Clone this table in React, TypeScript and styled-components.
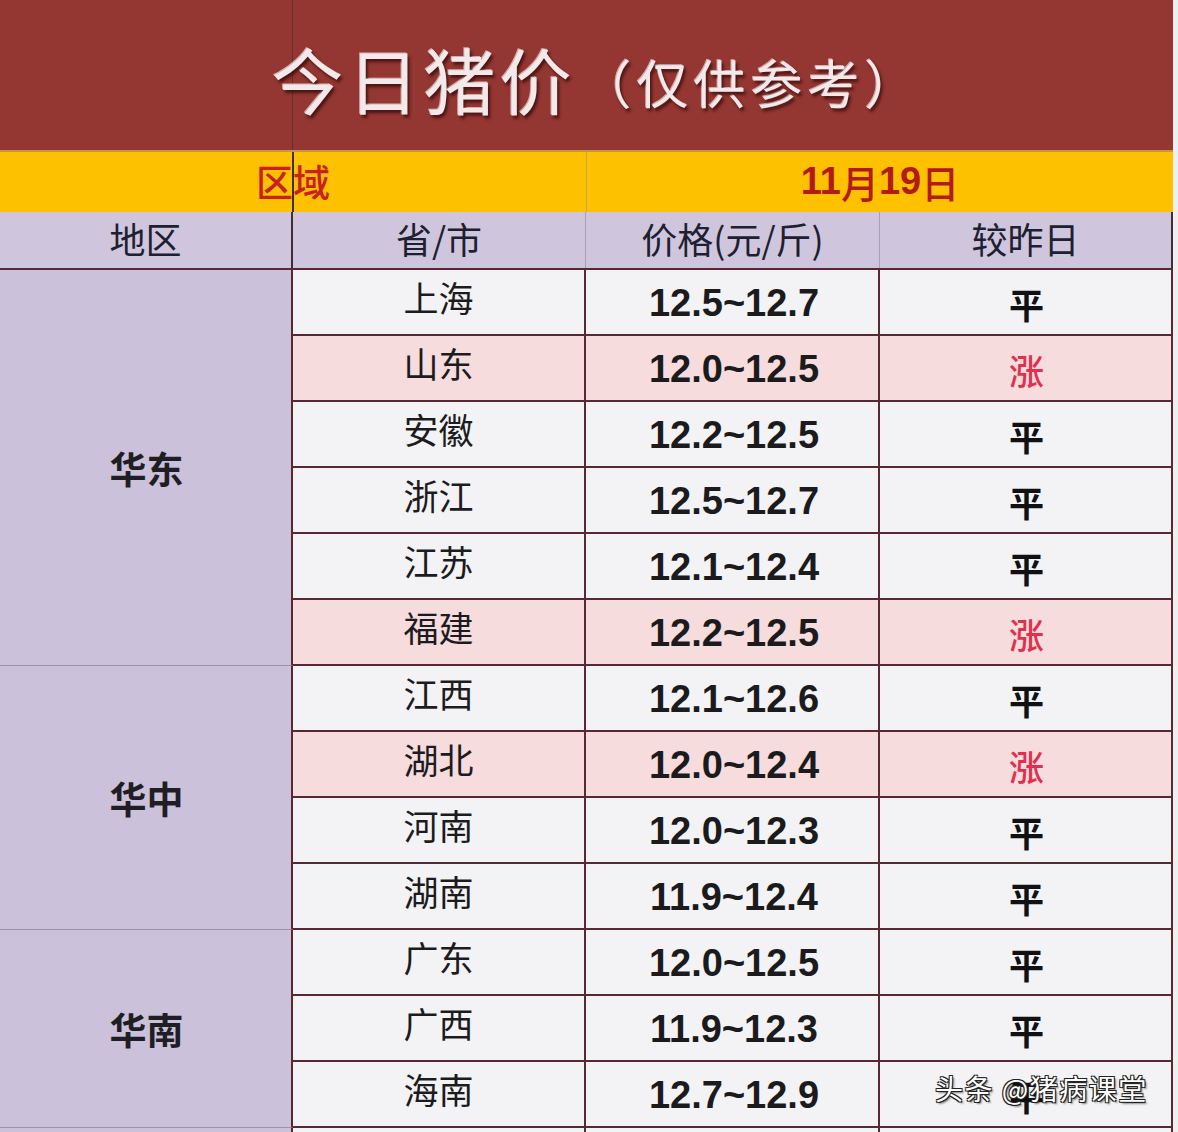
import styled, { createGlobalStyle } from "styled-components";

const GlobalStyle = createGlobalStyle`
  html, body {
    margin: 0;
    padding: 0;
    background: #eeeff1;
  }
  body {
    font-family: "Noto Sans CJK SC", "Noto Sans", sans-serif;
  }
`;

const CJK = `"Noto Sans CJK SC", "Noto Sans", sans-serif`;
const NUM = `"Liberation Sans", "Noto Sans CJK SC", sans-serif`;
const BORDER = "#5a2833";

const Page = styled.div`
  position: relative;
  width: 1178px;
  height: 1132px;
  overflow: hidden;
  background: #eeeff1;
`;

const Sheet = styled.div`
  width: 1173px;
  display: flex;
  flex-direction: column;
`;

const TitleBar = styled.div`
  position: relative;
  height: 150px;
  background: #943631;
  display: flex;
  align-items: center;
  justify-content: center;
  padding: 4px 0 0 20px;
  box-sizing: border-box;

  &::before {
    content: "";
    position: absolute;
    left: 292px;
    top: 0;
    bottom: 0;
    width: 1px;
    background: rgba(60, 40, 40, 0.55);
  }
`;

const TitleMain = styled.span`
  font-family: ${CJK};
  font-size: 72px;
  letter-spacing: 4px;
  color: #f3e8ea;
  text-shadow: 2px 3px 3px rgba(50, 10, 10, 0.75), -1px -1px 0 rgba(255, 255, 255, 0.6);
  position: relative;
`;

const TitleSub = styled.span`
  font-family: ${CJK};
  font-size: 52px;
  letter-spacing: 5px;
  color: #f3e8ea;
  margin-left: 4px;
  padding-top: 8px;
  text-shadow: 2px 3px 3px rgba(50, 10, 10, 0.75), -1px -1px 0 rgba(255, 255, 255, 0.6);
`;

const DateBar = styled.div`
  position: relative;
  height: 62px;
  display: grid;
  grid-template-columns: 587px 1fr;
  background: #fdc100;
  border-top: 2px solid #c9944a;
  box-sizing: border-box;

  &::before {
    content: "";
    position: absolute;
    left: 292px;
    top: 0;
    bottom: 0;
    width: 2px;
    background: #3e3030;
  }
`;

const DateCell = styled.div<{ $bold?: boolean; $divider?: boolean }>`
  display: flex;
  align-items: center;
  justify-content: center;
  font-family: ${(p) => (p.$bold ? NUM : CJK)};
  font-weight: ${(p) => (p.$bold ? 700 : 500)};
  font-size: ${(p) => (p.$bold ? "38px" : "37px")};
  color: ${(p) => (p.$bold ? "#b31b1b" : "#c92020")};
  border-right: ${(p) => (p.$divider ? "1px solid #c7a25a" : "none")};
  padding-bottom: 2px;
`;

const HeaderRow = styled.div`
  height: 58px;
  display: grid;
  grid-template-columns: 293px 293px 294px 1fr;
  background: #cfc6de;
  border-bottom: 2px solid ${BORDER};
  box-sizing: border-box;
`;

const HeaderCell = styled.div<{ $dark?: boolean }>`
  display: flex;
  align-items: center;
  justify-content: center;
  font-family: ${CJK};
  font-size: 36px;
  color: #1d2030;
  border-right: ${(p) => (p.$dark ? `2px solid #3e3036` : "1px solid #a99fb8")};
  padding-bottom: 4px;
`;

const Group = styled.div`
  display: grid;
  grid-template-columns: 293px 1fr;
`;

const RegionCell = styled.div`
  display: flex;
  align-items: center;
  justify-content: center;
  background: #cbc1db;
  border-right: 2px solid ${BORDER};
  border-bottom: 1px solid #9d92ad;
  font-family: ${CJK};
  font-weight: 700;
  font-size: 37px;
  color: #1e1e24;
  padding-left: 2px;
`;

const Rows = styled.div`
  display: flex;
  flex-direction: column;
`;

const Row = styled.div<{ $up?: boolean }>`
  height: 66px;
  display: grid;
  grid-template-columns: 293px 294px 1fr;
  background: ${(p) => (p.$up ? "#f6dcdc" : "#f3f3f5")};
  border-bottom: 2px solid ${BORDER};
  box-sizing: border-box;
`;

const Cell = styled.div`
  display: flex;
  align-items: center;
  justify-content: center;
  border-right: 2px solid ${BORDER};
`;

const Province = styled(Cell)`
  font-family: ${CJK};
  font-size: 35px;
  color: #1b1b20;
  padding-bottom: 12px;
`;

const Price = styled(Cell)`
  font-family: ${NUM};
  font-weight: 700;
  font-size: 38px;
  color: #1b1b1e;
  padding-top: 2px;
  padding-left: 4px;
`;

const Change = styled(Cell)<{ $up?: boolean }>`
  font-family: ${CJK};
  font-weight: ${(p) => (p.$up ? 500 : 700)};
  font-size: 35px;
  color: ${(p) => (p.$up ? "#e0304e" : "#111114")};
  padding-top: 2px;
  padding-left: 2px;
`;

const Watermark = styled.div`
  position: absolute;
  left: 935px;
  top: 1068px;
  font-family: ${CJK};
  font-size: 28px;
  color: #ffffff;
  letter-spacing: 1.5px;
  text-shadow: 1px 1px 0 #222, -1px -1px 0 #222, 1px -1px 0 #222, -1px 1px 0 #222,
    2px 2px 2px rgba(0, 0, 0, 0.5);
`;

type Item = { name: string; price: string; up?: boolean };
type Region = { region: string; items: Item[] };

const data: Region[] = [
  {
    region: "华东",
    items: [
      { name: "上海", price: "12.5~12.7" },
      { name: "山东", price: "12.0~12.5", up: true },
      { name: "安徽", price: "12.2~12.5" },
      { name: "浙江", price: "12.5~12.7" },
      { name: "江苏", price: "12.1~12.4" },
      { name: "福建", price: "12.2~12.5", up: true },
    ],
  },
  {
    region: "华中",
    items: [
      { name: "江西", price: "12.1~12.6" },
      { name: "湖北", price: "12.0~12.4", up: true },
      { name: "河南", price: "12.0~12.3" },
      { name: "湖南", price: "11.9~12.4" },
    ],
  },
  {
    region: "华南",
    items: [
      { name: "广东", price: "12.0~12.5" },
      { name: "广西", price: "11.9~12.3" },
      { name: "海南", price: "12.7~12.9" },
    ],
  },
];

const App = () => {
  return (
    <Page>
      <GlobalStyle />
      <Sheet>
        <TitleBar>
          <TitleMain>今日猪价</TitleMain>
          <TitleSub>（仅供参考）</TitleSub>
        </TitleBar>
        <DateBar>
          <DateCell $divider>区域</DateCell>
          <DateCell $bold>
            11<span style={{ fontFamily: CJK, fontWeight: 500 }}>月</span>19
            <span style={{ fontFamily: CJK, fontWeight: 500 }}>日</span>
          </DateCell>
        </DateBar>
        <HeaderRow>
          <HeaderCell $dark>地区</HeaderCell>
          <HeaderCell>省/市</HeaderCell>
          <HeaderCell>价格(元/斤)</HeaderCell>
          <HeaderCell $dark>较昨日</HeaderCell>
        </HeaderRow>
        {data.map((group) => (
          <Group key={group.region}>
            <RegionCell>{group.region}</RegionCell>
            <Rows>
              {group.items.map((item) => (
                <Row key={item.name} $up={item.up}>
                  <Province>{item.name}</Province>
                  <Price>{item.price}</Price>
                  <Change $up={item.up}>{item.up ? "涨" : "平"}</Change>
                </Row>
              ))}
            </Rows>
          </Group>
        ))}
        <Group>
          <RegionCell />
          <Rows>
            <Row>
              <Province />
              <Price />
              <Change />
            </Row>
          </Rows>
        </Group>
      </Sheet>
      <Watermark>头条 @猪病课堂</Watermark>
    </Page>
  );
};

export default App;
